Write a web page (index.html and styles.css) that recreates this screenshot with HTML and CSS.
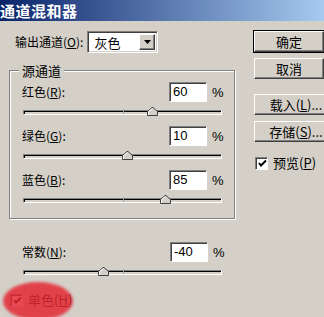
FILE: index.html
```html
<!DOCTYPE html>
<html lang="zh-CN">
<head>
<meta charset="utf-8">
<title>通道混和器</title>
<link rel="stylesheet" href="styles.css">
</head>
<body>
<div class="dlg">
  <div class="title">通道混和器</div>
  <div class="main">
    <div class="left">
      <div class="out-row">
        <span class="lbl">输出通道(<u>O</u>):</span>
        <div class="select">
          <span class="sel-val">灰色</span>
          <span class="sel-btn"><svg width="7" height="4" viewBox="0 0 7 4"><polygon points="0,0 7,0 3.5,4" fill="#000"/></svg></span>
        </div>
      </div>

      <div class="group">
        <span class="legend">源通道</span>
        <div class="chan">
          <div class="chan-row"><span class="lbl">红色(<u>R</u>):</span><span class="num">60</span><span class="pct">%</span></div>
          <div class="slider"><div class="track"><span class="tick"></span></div><span class="thumb" style="left:65%"><svg width="11" height="9" viewBox="0 0 11 9"><polygon points="0.5,8.5 0.5,4.5 5,0.5 6,0.5 10.5,4.5 10.5,8.5" fill="#d4d0c8" stroke="#404040"/><polyline points="1.5,8 1.5,4.8 5.5,1.5" fill="none" stroke="#fff"/></svg></span></div>
        </div>
        <div class="chan">
          <div class="chan-row"><span class="lbl">绿色(<u>G</u>):</span><span class="num">10</span><span class="pct">%</span></div>
          <div class="slider"><div class="track"><span class="tick"></span></div><span class="thumb" style="left:52.5%"><svg width="11" height="9" viewBox="0 0 11 9"><polygon points="0.5,8.5 0.5,4.5 5,0.5 6,0.5 10.5,4.5 10.5,8.5" fill="#d4d0c8" stroke="#404040"/><polyline points="1.5,8 1.5,4.8 5.5,1.5" fill="none" stroke="#fff"/></svg></span></div>
        </div>
        <div class="chan">
          <div class="chan-row"><span class="lbl">蓝色(<u>B</u>):</span><span class="num">85</span><span class="pct">%</span></div>
          <div class="slider"><div class="track"><span class="tick"></span></div><span class="thumb" style="left:71.25%"><svg width="11" height="9" viewBox="0 0 11 9"><polygon points="0.5,8.5 0.5,4.5 5,0.5 6,0.5 10.5,4.5 10.5,8.5" fill="#d4d0c8" stroke="#404040"/><polyline points="1.5,8 1.5,4.8 5.5,1.5" fill="none" stroke="#fff"/></svg></span></div>
        </div>
      </div>

      <div class="const">
        <div class="chan-row"><span class="lbl">常数(<u>N</u>):</span><span class="num">-40</span><span class="pct">%</span></div>
        <div class="slider"><div class="track"><span class="tick"></span></div><span class="thumb" style="left:40%"><svg width="11" height="9" viewBox="0 0 11 9"><polygon points="0.5,8.5 0.5,4.5 5,0.5 6,0.5 10.5,4.5 10.5,8.5" fill="#d4d0c8" stroke="#404040"/><polyline points="1.5,8 1.5,4.8 5.5,1.5" fill="none" stroke="#fff"/></svg></span></div>
      </div>

      <div class="mono">
        <span class="check"><svg width="9" height="9" viewBox="0 0 9 9"><polyline points="1,4 3,6.5 8,1.5" fill="none" stroke="#000" stroke-width="2"/></svg></span>
        <span class="lbl">单色(<u>H</u>)</span>
        <span class="highlight"></span>
      </div>
    </div>

    <div class="right">
      <div class="btn btn-default">确定</div>
      <div class="btn btn-gap">取消</div>
      <div class="btn btn-wide btn-gap-lg">载入(<u>L</u>)...</div>
      <div class="btn btn-wide btn-gap">存储(<u>S</u>)...</div>
      <div class="preview">
        <span class="check"><svg width="9" height="9" viewBox="0 0 9 9"><polyline points="1,4 3,6.5 8,1.5" fill="none" stroke="#000" stroke-width="2"/></svg></span>
        <span class="lbl">预览(<u>P</u>)</span>
      </div>
    </div>
  </div>
</div>
</body>
</html>
```

FILE: styles.css
```css
* { box-sizing: border-box; }
html, body { margin: 0; padding: 0; }
body {
  width: 324px;
  height: 317px;
  overflow: hidden;
  background: #d4d0c8;
  font-family: "Noto Sans CJK SC", "Liberation Sans", sans-serif;
  font-size: 12px;
  color: #000;
}
u { text-decoration: underline; text-underline-offset: 1px; }

.dlg { position: relative; width: 324px; height: 317px; overflow: hidden; }

.title {
  height: 21px;
  background: linear-gradient(to right, #0a246a, #a6caf0);
  color: #fff;
  font-weight: bold;
  font-size: 15px;
  line-height: 21px;
  padding-left: 0;
  letter-spacing: 0.5px;
}

.main { display: flex; }
.left { width: 254px; flex: none; }
.right { flex: 1; padding-top: 10px; min-width: 0; }

.lbl { line-height: 14px; white-space: nowrap; }

.out-row {
  display: flex;
  align-items: center;
  margin-top: 10px;
  padding-left: 15px;
  height: 22px;
}
.select {
  margin-left: 4px;
  width: 71px;
  height: 22px;
  background: #fff;
  border-top: 1px solid #808080;
  border-left: 1px solid #808080;
  border-bottom: 1px solid #fff;
  border-right: 1px solid #fff;
  box-shadow: inset 1px 1px 0 #404040, inset -1px -1px 0 #d4d0c8;
  display: flex;
  align-items: center;
  padding: 2px;
}
.sel-val { flex: 1; padding-left: 4px; font-size: 13px; }
.sel-btn {
  width: 16px;
  height: 16px;
  background: #d4d0c8;
  border-top: 1px solid #fff;
  border-left: 1px solid #fff;
  border-right: 1px solid #404040;
  border-bottom: 1px solid #404040;
  box-shadow: inset -1px -1px 0 #808080;
  display: flex;
  align-items: center;
  justify-content: center;
}

.group {
  position: relative;
  margin: 17px 0 0 9px;
  width: 226px;
  height: 149px;
  border: 1px solid #808080;
  box-shadow: 1px 1px 0 #fff, inset 1px 1px 0 #fff;
  padding: 11px 12px 0 12px;
}
.legend {
  position: absolute;
  top: -8px;
  left: 9px;
  padding: 0 3px;
  background: #d4d0c8;
  font-size: 13px;
  line-height: 15px;
}
.chan { margin-bottom: 8px; }

.chan-row {
  display: flex;
  align-items: center;
  height: 20px;
}
.chan-row .lbl { font-size: 12px; }
.num {
  margin-left: auto;
  width: 38px;
  height: 20px;
  background: #fff;
  border-top: 1px solid #808080;
  border-left: 1px solid #808080;
  border-bottom: 1px solid #fff;
  border-right: 1px solid #fff;
  box-shadow: inset 1px 1px 0 #404040;
  font-family: "Liberation Sans", sans-serif;
  font-size: 13px;
  line-height: 17px;
  padding-left: 3px;
}
.pct {
  width: 10px;
  margin-left: 5px;
  font-family: "Liberation Sans", sans-serif;
  font-size: 13px;
}

.slider {
  position: relative;
  margin-top: 4px;
  height: 12px;
  margin-left: 1px;
  width: 199px;
}
.track {
  position: absolute;
  left: 0; right: 0;
  top: 4px;
  height: 5px;
  border-top: 1px solid #808080;
  border-left: 1px solid #808080;
  border-bottom: 1px solid #fff;
  border-right: 1px solid #fff;
  box-shadow: inset 1px 1px 0 #000;
  background: #d4d0c8;
}
.tick {
  position: absolute;
  left: 50%;
  top: 0;
  width: 1px;
  height: 3px;
  background: #a0a0a0;
}
.thumb {
  position: absolute;
  top: 1px;
  width: 11px;
  height: 9px;
  margin-left: -5px;
  display: block;
}
.thumb svg { display: block; }

.const {
  margin: 23px 0 0 22px;
  width: 201px;
}

.mono {
  position: relative;
  display: flex;
  align-items: center;
  margin: 15px 0 0 10px;
  height: 14px;
}
.check {
  width: 13px;
  height: 13px;
  background: #fff;
  border-top: 1px solid #808080;
  border-left: 1px solid #808080;
  border-bottom: 1px solid #fff;
  border-right: 1px solid #fff;
  box-shadow: inset 1px 1px 0 #404040;
  display: flex;
  align-items: center;
  justify-content: center;
  margin-right: 5px;
  flex: none;
}
.check svg { display: block; margin: 1px 0 0 1px; }
.mono .lbl { font-size: 13px; }

.highlight {
  position: absolute;
  left: -7px;
  top: -11px;
  width: 70px;
  height: 38px;
  border-radius: 50%;
  background: rgba(228, 38, 50, 0.84);
  filter: blur(1.5px);
}

.btn {
  width: 70px;
  height: 21px;
  border-top: 1px solid #fff;
  border-left: 1px solid #fff;
  border-right: 1px solid #404040;
  border-bottom: 1px solid #404040;
  box-shadow: inset -1px -1px 0 #808080;
  display: flex;
  align-items: center;
  justify-content: center;
  font-size: 13px;
  white-space: nowrap;
  flex: none;
}
.btn-wide { width: 84px; }
.btn-default {
  outline: 1px solid #000;
}
.btn-gap { margin-top: 6px; }
.btn-gap-lg { margin-top: 15px; }

.preview {
  display: flex;
  align-items: center;
  margin-top: 14px;
  height: 14px;
  padding-left: 1px;
}
.preview .lbl { font-size: 13px; }
```
